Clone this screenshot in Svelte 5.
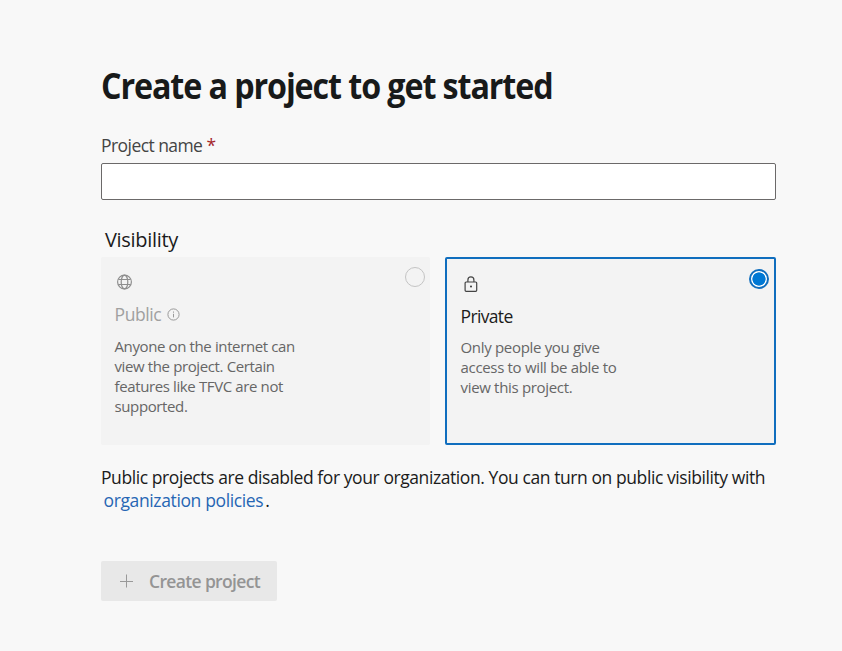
<script>
  let name = $state('');
  let visibility = $state('private');
  const options = [
    {
      id: 'public',
      title: 'Public',
      disabled: true,
      lines: [
        'Anyone on the internet can',
        'view the project. Certain',
        'features like TFVC are not',
        'supported.'
      ]
    },
    {
      id: 'private',
      title: 'Private',
      disabled: false,
      lines: ['Only people you give', 'access to will be able to', 'view this project.']
    }
  ];
</script>

<main>
  <h1>Create a project to get started</h1>
  <label for="name">Project name <span class="req">*</span></label>
  <input id="name" type="text" bind:value={name} />

  <h2>Visibility</h2>
  <div class="cards" role="radiogroup">
    {#each options as o (o.id)}
      <div class="card {o.id}" class:selected={visibility === o.id}>
        <div class="body">
          {#if o.id === 'public'}
            <svg class="icon" width="16" height="16" viewBox="0 0 16 16" fill="none" stroke="#8e8e8e" stroke-width="1.2">
              <circle cx="7.5" cy="8" r="6.9" />
              <ellipse cx="7.5" cy="8" rx="3.3" ry="6.9" />
              <path d="M1.5 5.5h12M1.5 10.5h12" />
            </svg>
          {:else}
            <svg class="icon" width="16" height="16" viewBox="0 0 16 16" fill="none" stroke="#444">
              <rect x="2.1" y="6" width="11.6" height="9.3" rx="1" stroke-width="1.2" />
              <path d="M4.9 6V3.9a3 3 0 0 1 6 0V6" stroke-width="1.2" />
              <circle cx="8" cy="10.6" r="1" fill="#333" stroke="none" />
            </svg>
          {/if}
          <div class="title">
            <span>{o.title}</span>
            {#if o.id === 'public'}
              <svg width="13" height="13" viewBox="0 0 13 13" fill="none" stroke="#999">
                <circle cx="6.5" cy="6.5" r="5.6" />
                <path d="M6.5 5.8v3.6M6.5 3.5v1.2" />
              </svg>
            {/if}
          </div>
          <p>
            {#each o.lines as line}<span class="line">{line}</span>{/each}
          </p>
        </div>
        <button
          class="radio"
          role="radio"
          aria-label={o.title}
          aria-checked={visibility === o.id}
          disabled={o.disabled}
          onclick={() => (visibility = o.id)}
        ></button>
      </div>
    {/each}
  </div>

  <p class="note">
    <span class="line first">Public projects are disabled for your organization. You can turn on public visibility with</span>
    <span class="line second"><a href="#policies">organization policies</a><span>.</span></span>
  </p>

  <button class="create" disabled>
    <svg width="14" height="14" viewBox="0 0 14 14" fill="none" stroke="#999"><path d="M7.5 0.5v13M1 7.5h13" /></svg>
    <span>Create project</span>
  </button>
</main>

<style>
  :global(body) {
    background: #f8f8f8;
  }
  main {
    box-sizing: border-box;
    width: 842px;
    height: 651px;
    padding: 62px 66px 0 101px;
    display: flex;
    flex-direction: column;
    background: #f8f8f8;
    color: #1b1b1b;
    font-family: 'Open Sans', 'Noto Sans', sans-serif;
    white-space: nowrap;
  }
  h1,
  h2,
  p {
    margin: 0;
  }
  h1 {
    font-size: 35px;
    font-weight: 700;
    line-height: 48px;
    letter-spacing: -1.2px;
    color: #181a1a;
    transform: scaleX(0.922);
    transform-origin: left;
  }
  label {
    margin-top: 23px;
    font-size: 17.5px;
    line-height: 24px;
    letter-spacing: -0.56px;
    color: #444;
  }
  .req {
    color: #a4262c;
  }
  input {
    box-sizing: border-box;
    width: 675px;
    height: 37px;
    margin: 6px 0 0;
    padding: 0 10px;
    border: 1px solid #6b6969;
    border-radius: 2px;
    background: #fff;
    font: inherit;
    outline: none;
  }
  h2 {
    margin: 27px 0 4px 4px;
    font-size: 20px;
    font-weight: 400;
    line-height: 26px;
    letter-spacing: -0.3px;
  }
  .cards {
    display: flex;
    gap: 15px;
    height: 188px;
  }
  .card {
    box-sizing: border-box;
    display: flex;
    justify-content: space-between;
    width: 329px;
    border-radius: 2px;
    background: #f3f3f3;
  }
  .card {
    padding: 17px 5px 0 13.5px;
  }
  .private {
    width: 331px;
  }
  .selected {
    border: 2px solid #106ebe;
  }
  .icon {
    display: block;
    margin-left: 2.5px;
  }
  .title {
    display: flex;
    align-items: center;
    gap: 6px;
    margin-top: 12px;
    font-size: 17.5px;
    line-height: 24px;
    letter-spacing: -0.4px;
  }
  .private .title {
    letter-spacing: -0.65px;
  }
  .public .title {
    color: #a0a0a0;
  }
  .line {
    display: block;
  }
  .body p {
    margin-top: 10px;
    font-size: 15px;
    line-height: 20px;
    letter-spacing: -0.38px;
    color: #666;
  }
  .private .body p {
    margin-top: 9px;
    letter-spacing: -0.32px;
  }
  .radio {
    box-sizing: border-box;
    width: 20px;
    height: 20px;
    margin: -7px 0 0;
    padding: 0;
    border: 1px solid #c4c4c4;
    border-radius: 50%;
    background: transparent;
  }
  .selected .radio {
    border: 2px solid #106ebe;
    background: radial-gradient(circle, #0078d4 6.3px, #fff 6.9px);
  }
  .note {
    margin-top: 21px;
    font-size: 17.5px;
    line-height: 23px;
    letter-spacing: -0.42px;
  }
  .second {
    margin-left: 2.5px;
    letter-spacing: -0.37px;
  }
  a {
    margin-right: 2px;
    color: #2766b4;
    text-decoration: none;
  }
  .create {
    display: flex;
    align-items: center;
    gap: 16px;
    width: 176px;
    height: 40px;
    margin-top: 49px;
    padding: 0 0 0 18px;
    border: 0;
    border-radius: 2px;
    background: #e8e8e8;
    color: #949494;
    font-family: inherit;
    font-size: 17.5px;
    font-weight: 600;
    letter-spacing: -0.65px;
  }
</style>
